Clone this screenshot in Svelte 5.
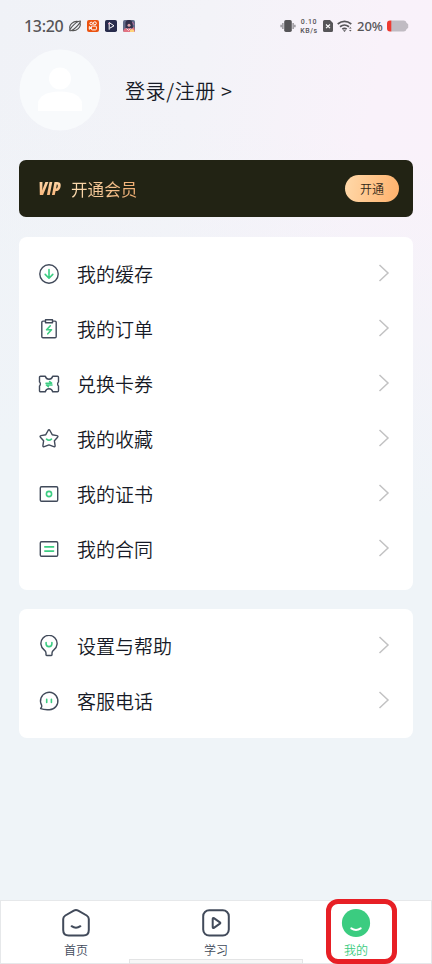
<script lang="ts">
	type Item = { label: string; outline: string; accent: string };

	const orders: Item[] = [
		{
			label: '我的缓存',
			outline: 'M11 1.8a9.2 9.2 0 1 1 0 18.4a9.2 9.2 0 1 1 0-18.4z',
			accent: 'M11 6.6v8.3M7.2 11.4l3.8 3.8l3.8-3.8'
		},
		{
			label: '我的订单',
			outline:
				'M7.3 3.1H5a1.2 1.2 0 0 0-1.2 1.2v14.3a1.2 1.2 0 0 0 1.2 1.2h12a1.2 1.2 0 0 0 1.2-1.2V4.3A1.2 1.2 0 0 0 17 3.1h-2.3M7.5 1.7h7v3h-7z',
			accent: 'M12.3 7.8l-3.7 4h4.9l-3.7 4'
		},
		{
			label: '兑换卡券',
			outline:
				'M2.5 3.2h4.8c.5 1.9 1.800 3 3.700 3s3.200-1.100 3.700-3h4.800a1 1 0 0 1 1 1v4.800q-.9.6-.9 2t.9 2v4.800a1 1 0 0 1-1 1h-4.800c-.5-1.900-1.800-3-3.700-3s-3.200 1.100-3.700 3H2.500a1 1 0 0 1-1-1V13q.9-.6.9-2t-.9-2V4.200a1 1 0 0 1 1-1z',
			accent: 'M8 10.200h5.600l-2-1.700M14 12h-5.600l2 1.700'
		},
		{
			label: '我的收藏',
			outline:
				'M10.1 2.5q.9-1.4 1.8 0l2.3 4.2l4.8.9q1.5.4.6 1.6l-3.2 3.6l.7 4.9q0 1.4-1.4 1L11 16.9l-4.7 1.8q-1.4.4-1.4-1l.7-4.9l-3.2-3.6q-.9-1.2.6-1.6l4.8-.9z',
			accent: 'M8.5 11.2q2.5 2 5 0'
		},
		{
			label: '我的证书',
			outline:
				'M3.5 3.7h15a1.2 1.2 0 0 1 1.2 1.2v12.2a1.2 1.2 0 0 1-1.2 1.2h-15a1.2 1.2 0 0 1-1.2-1.2V4.9a1.2 1.2 0 0 1 1.2-1.2z',
			accent: 'M11 8.4a2.6 2.6 0 1 1 0 5.2a2.6 2.6 0 1 1 0-5.2z'
		},
		{
			label: '我的合同',
			outline:
				'M3.5 3.7h15a1.2 1.2 0 0 1 1.2 1.2v12.2a1.2 1.2 0 0 1-1.2 1.2h-15a1.2 1.2 0 0 1-1.2-1.2V4.9a1.2 1.2 0 0 1 1.2-1.2z',
			accent: 'M6.8 8.9h8.8M6.8 13.1h8.8'
		}
	];

	const support: Item[] = [
		{
			label: '设置与帮助',
			outline:
				'M8 18c0-1.3-.5-2-1.9-3.1a8.1 8.1 0 1 1 9.8 0C14.500 16 14 16.700 14 18v1.800a.7.7 0 0 1-.7.7H8.700a.7.7 0 0 1-.7-.7z',
			accent: 'M8.1 7.5v1.2a2.9 2.9 0 0 0 5.8 0V7.5'
		},
		{
			label: '客服电话',
			outline:
				'M3.7 15.4a8.7 8.7 0 1 1 7.7 4.3c-3.2.2-6.2 0-8.6-1q-.4-.3 0-.6c.8-.7 1.3-1.5.9-2.7z',
			accent: 'M8.7 9.3v3.2M13.4 9.3v3.2'
		}
	];
</script>

{#snippet row(item: Item)}
	<li class="row">
		<svg class="row__icon" viewBox="0 0 22 22">
			<path d={item.outline} />
			<path class="accent" d={item.accent} />
		</svg>
		<span class="row__label">{item.label}</span>
		<svg class="row__arrow" viewBox="0 0 12 20"><path d="M1.5 2L10 10L1.5 18" /></svg>
	</li>
{/snippet}

<div class="page">
	<header class="status">
		<span class="status__time">13:20</span>
		<svg class="status__app status__orbit" viewBox="0 0 14 14">
			<path
				d="M2 10.3C.5 6 5.5 1.5 10.3 2.6C7.200 4 4.800 6.500 2 10.300zM12 3.700C13.500 8 8.500 12.500 3.700 11.400C6.800 10 9.200 7.500 12 3.700z"
			/>
			<path d="M2 10.3Q.8 12.5 3.7 11.4M10.3 2.6Q13.4 1 12 3.7" />
		</svg>
		<svg class="status__app" viewBox="0 0 12 12">
			<rect width="12" height="12" rx="2" fill="#eb5310" />
			<g fill="none" stroke="#fff">
				<circle cx="4.2" cy="3.5" r="1.3" />
				<circle cx="7.8" cy="3.3" r="1.5" />
				<rect x="4.4" y="6.1" width="5" height="3.8" rx="1" />
				<path d="M2.3 6.5l2 1.4l-2 1.4z" />
			</g>
		</svg>
		<svg class="status__app" viewBox="0 0 12 12">
			<rect width="12" height="12" rx="1.8" fill="#282c4c" />
			<path d="M4.2 9.7V2.5l4.8 3.3l-4.1 2.3" fill="none" stroke="#fff" />
			<path d="M3 3.7h2" stroke="#f6a3ca" />
		</svg>
		<svg class="status__app" viewBox="0 0 12 12">
			<rect width="12" height="12" rx="1.8" fill="#626b89" />
			<path d="M2.5 8V4a3.5 3.5 0 0 1 7-1l.5 5z" fill="#34304b" />
			<circle cx="6" cy="5.3" r="1.5" fill="#dba5ad" />
			<path d="M0 11l2-3l2 1l2-1l2 1l3-2l1 4l-1 1H1z" fill="#e37382" />
			<path d="M7 10l2-1l2 1v2H7z" fill="#ffd27a" />
			<path d="M3.5 8.5l2 2l2-2" fill="none" stroke="#f7d6dc" />
			<path d="M9.5 2l1.5 3" stroke="#b76b99" />
		</svg>
		<span class="status__gap"></span>
		<svg class="status__vibrate" viewBox="0 0 16 14">
			<rect x="4.2" y="1" width="7.6" height="12" rx="1.7" fill="#565558" />
			<path
				d="M2.9 4v6M1.1 5.7v2.6M13.1 4v6M14.9 5.7v2.6"
				stroke="#77757a"
				stroke-width="1.1"
			/>
		</svg>
		<span class="status__speed"><span>0.10</span><span>KB/s</span></span>
		<svg class="status__sim" viewBox="0 0 10 12">
			<path
				d="M1.5 0H7l3 3v7.5A1.5 1.5 0 0 1 8.5 12h-7A1.5 1.5 0 0 1 0 10.5v-9A1.5 1.5 0 0 1 1.5 0z"
				fill="#565558"
			/>
			<path d="M3 4.5l4 3.6M7 4.5L3 8.1" stroke="#fff" stroke-width="1.2" />
		</svg>
		<svg class="status__wifi" viewBox="0 0 16 13">
			<path
				d="M.7 4q6.8-5.2 13.6 0M3 6.7q4.5-3.4 9 0M5.3 9.2q2.2-1.7 4.4 0"
				fill="none"
				stroke="#565558"
				stroke-width="1.7"
			/>
			<path
				d="M5.9 10.3h3.2L7.5 12zM12 8.6l1.3-1.5l1.3 1.5zM12 10l1.3 1.5L14.6 10z"
				fill="#565558"
			/>
		</svg>
		<span class="status__percent">20%</span>
		<svg class="status__battery" viewBox="0 0 22 12">
			<path
				d="M4 .5h12.5a3 3 0 0 1 3 2.2l1.7 1.6v3.4l-1.7 1.6a3 3 0 0 1-3 2.2H4z"
				fill="#c0bbc2"
			/>
			<path d="M4.3.5v11H3a3 3 0 0 1-3-3v-5a3 3 0 0 1 3-3z" fill="#ee3a31" />
		</svg>
	</header>

	<section class="profile">
		<svg class="profile__avatar" viewBox="0 0 82 82">
			<circle cx="41" cy="41" r="40.5" fill="#f8fafc" />
			<circle cx="41" cy="29.5" r="11" fill="#fff" />
			<path d="M19 62v-7.5c0-6.5 8-12 22-12s22 5.5 22 12V62z" fill="#fff" />
		</svg>
		<span class="profile__login">登录/注册 &gt;</span>
	</section>

	<section class="vip">
		<span class="vip__logo">VIP</span>
		<span class="vip__title">开通会员</span>
		<span class="vip__space"></span>
		<button class="vip__button">开通</button>
	</section>

	<ul class="card">
		{#each orders as item}
			{@render row(item)}
		{/each}
	</ul>

	<ul class="card card--support">
		{#each support as item}
			{@render row(item)}
		{/each}
	</ul>

	<nav class="tabs">
		<div class="tab">
			<svg viewBox="0 0 30 30">
				<path
					d="M12.8 2.6q2.2-1.2 4.4 0l8.5 4.9q2.1 1.3 2.1 3.5v11q0 5.5-5.5 5.5H7.700q-5.500 0-5.500-5.500V11q0-2.200 2.100-3.500z"
				/>
				<path d="M10.6 18.2q4.4 3 8.8 0" />
			</svg>
			<span>首页</span>
		</div>
		<div class="tab">
			<svg viewBox="0 0 30 30">
				<rect x="2.2" y="2.2" width="25.6" height="25.4" rx="6" />
				<path d="M11.7 11v8q0 1.4 1.2.8l6-4.1q.9-.7 0-1.4l-6-4.1q-1.2-.6-1.2.8z" />
			</svg>
			<span>学习</span>
		</div>
		<div class="tab tab--active">
			<svg viewBox="0 0 30 30">
				<circle cx="15" cy="15" r="14.1" />
				<path d="M10.3 20.3q4.7 3.2 9.4 0" />
			</svg>
			<span>我的</span>
			<div class="tab__marker"></div>
		</div>
		<div class="home-bar"></div>
	</nav>
</div>

<style>
	:global(body) {
		margin: 0;
		overflow: hidden;
	}

	.page {
		display: flex;
		flex-direction: column;
		box-sizing: border-box;
		width: 432px;
		height: 964px;
		overflow: hidden;
		font-family: 'Noto Sans CJK SC', sans-serif;
		font-weight: 350;
		color: #161a26;
		background:
			linear-gradient(10deg, #eff4f8 50%, rgba(239, 244, 248, 0) 85%),
			linear-gradient(100deg, #f0f2f7 0%, #f3f3f8 35%, #f9f2fa 65%, #faf2fa 100%);
	}

	.status {
		display: flex;
		align-items: center;
		height: 50px;
		padding: 2px 23px 0 24px;
		box-sizing: border-box;
		color: #565558;
		font-family: 'Noto Sans', sans-serif;
	}

	.status__time {
		width: 44px;
		font-size: 16px;
		font-weight: 500;
		letter-spacing: -0.3px;
		white-space: nowrap;
	}

	.status__app {
		width: 12px;
		height: 12px;
		margin-right: 6px;
	}

	.status__orbit {
		width: 14px;
		height: 14px;
		margin-right: 5px;
		fill: none;
		stroke: #555;
		stroke-width: 1.1;
	}

	.status__gap {
		flex: 1;
	}

	.status__vibrate {
		width: 16px;
		height: 14px;
		margin-right: 3px;
	}

	.status__speed {
		display: flex;
		flex-direction: column;
		gap: 1px;
		width: 20px;
		margin-right: 4px;
		font-family: Roboto, sans-serif;
		font-size: 7px;
		font-weight: 500;
		letter-spacing: 0.6px;
		line-height: normal;
		text-align: center;
	}

	.status__sim {
		width: 10px;
		height: 12px;
		margin-right: 4px;
	}

	.status__wifi {
		width: 16px;
		height: 13px;
		margin-right: 4px;
	}

	.status__percent {
		width: 27px;
		margin-right: 3px;
		font-size: 13px;
		font-weight: 500;
	}

	.status__battery {
		width: 22px;
		height: 12px;
	}

	.profile {
		display: flex;
		align-items: center;
		gap: 24px;
		height: 80px;
		padding-left: 19px;
	}

	.profile__avatar {
		width: 82px;
		height: 82px;
	}

	.profile__login {
		padding-top: 2px;
		font-size: 20px;
		line-height: 28px;
		letter-spacing: 0.6px;
	}

	.vip {
		display: flex;
		align-items: center;
		box-sizing: border-box;
		height: 57px;
		margin: 30px 19px 0;
		padding: 0 14px 0 19px;
		border-radius: 7px;
		background: #222314;
	}

	.vip__logo {
		width: 33px;
		font-family: 'Open Sans', sans-serif;
		font-size: 17px;
		font-weight: 800;
		font-style: italic;
		font-stretch: condensed;
		letter-spacing: 0.3px;
		background: linear-gradient(to bottom, #ffdfb3, #f8ad70);
		background-clip: text;
		color: transparent;
	}

	.vip__title {
		font-size: 16.6px;
		font-weight: 400;
		background: linear-gradient(to right, #fbdcb1, #efac71);
		background-clip: text;
		color: transparent;
	}

	.vip__space {
		flex: 1;
	}

	.vip__button {
		width: 54px;
		height: 27px;
		padding: 0;
		border: none;
		border-radius: 14px;
		font: inherit;
		font-size: 12px;
		color: #302818;
		background: linear-gradient(100deg, #ffd9aa, #ffb16b);
	}

	.card {
		box-sizing: border-box;
		height: 353px;
		margin: 20px 19px 0;
		padding: 9px 23px 0 19px;
		border-radius: 8px;
		background: #fff;
		list-style: none;
	}

	.card--support {
		height: 129px;
		margin-top: 19px;
	}

	.row {
		display: flex;
		align-items: center;
		height: 55px;
	}

	.row__icon {
		width: 22px;
		height: 22px;
		margin-right: 17px;
		fill: none;
		stroke: #414a5a;
		stroke-width: 1.4;
		stroke-linecap: round;
		stroke-linejoin: round;
	}

	.accent {
		stroke: #3ccd82;
		stroke-width: 1.6;
	}

	.row__label {
		flex: 1;
		font-size: 19px;
		line-height: 28px;
	}

	.row__arrow {
		width: 12px;
		height: 20px;
		margin-bottom: 1px;
		fill: none;
		stroke: #c2c2c3;
		stroke-width: 1.5;
	}

	.tabs {
		position: relative;
		display: flex;
		justify-content: space-between;
		box-sizing: border-box;
		height: 64px;
		margin-top: auto;
		padding: 7px 41px 0;
		border: 1px solid #e6e8ea;
		background: #fff;
	}

	.tab {
		position: relative;
		display: flex;
		flex-direction: column;
		align-items: center;
		width: 68px;
		font-size: 12px;
		line-height: 16px;
		color: #414a5a;
	}

	.tab svg {
		width: 30px;
		height: 30px;
		margin-bottom: 4px;
		fill: none;
		stroke: #414a5a;
		stroke-width: 2;
		stroke-linecap: round;
		stroke-linejoin: round;
	}

	.tab--active {
		color: #3bcc80;
	}

	.tab--active svg {
		stroke: #fff;
	}

	.tab--active circle {
		fill: #3bcc80;
		stroke: none;
	}

	.tab__marker {
		position: absolute;
		top: -9px;
		left: 4px;
		box-sizing: border-box;
		width: 71px;
		height: 65px;
		border: 5px solid #e71f25;
		border-radius: 12px;
	}

	.home-bar {
		position: absolute;
		left: 128px;
		bottom: -1px;
		box-sizing: border-box;
		width: 174px;
		height: 5px;
		border: 1px solid #e3e4e5;
		background: #f7f7f7;
	}
</style>
